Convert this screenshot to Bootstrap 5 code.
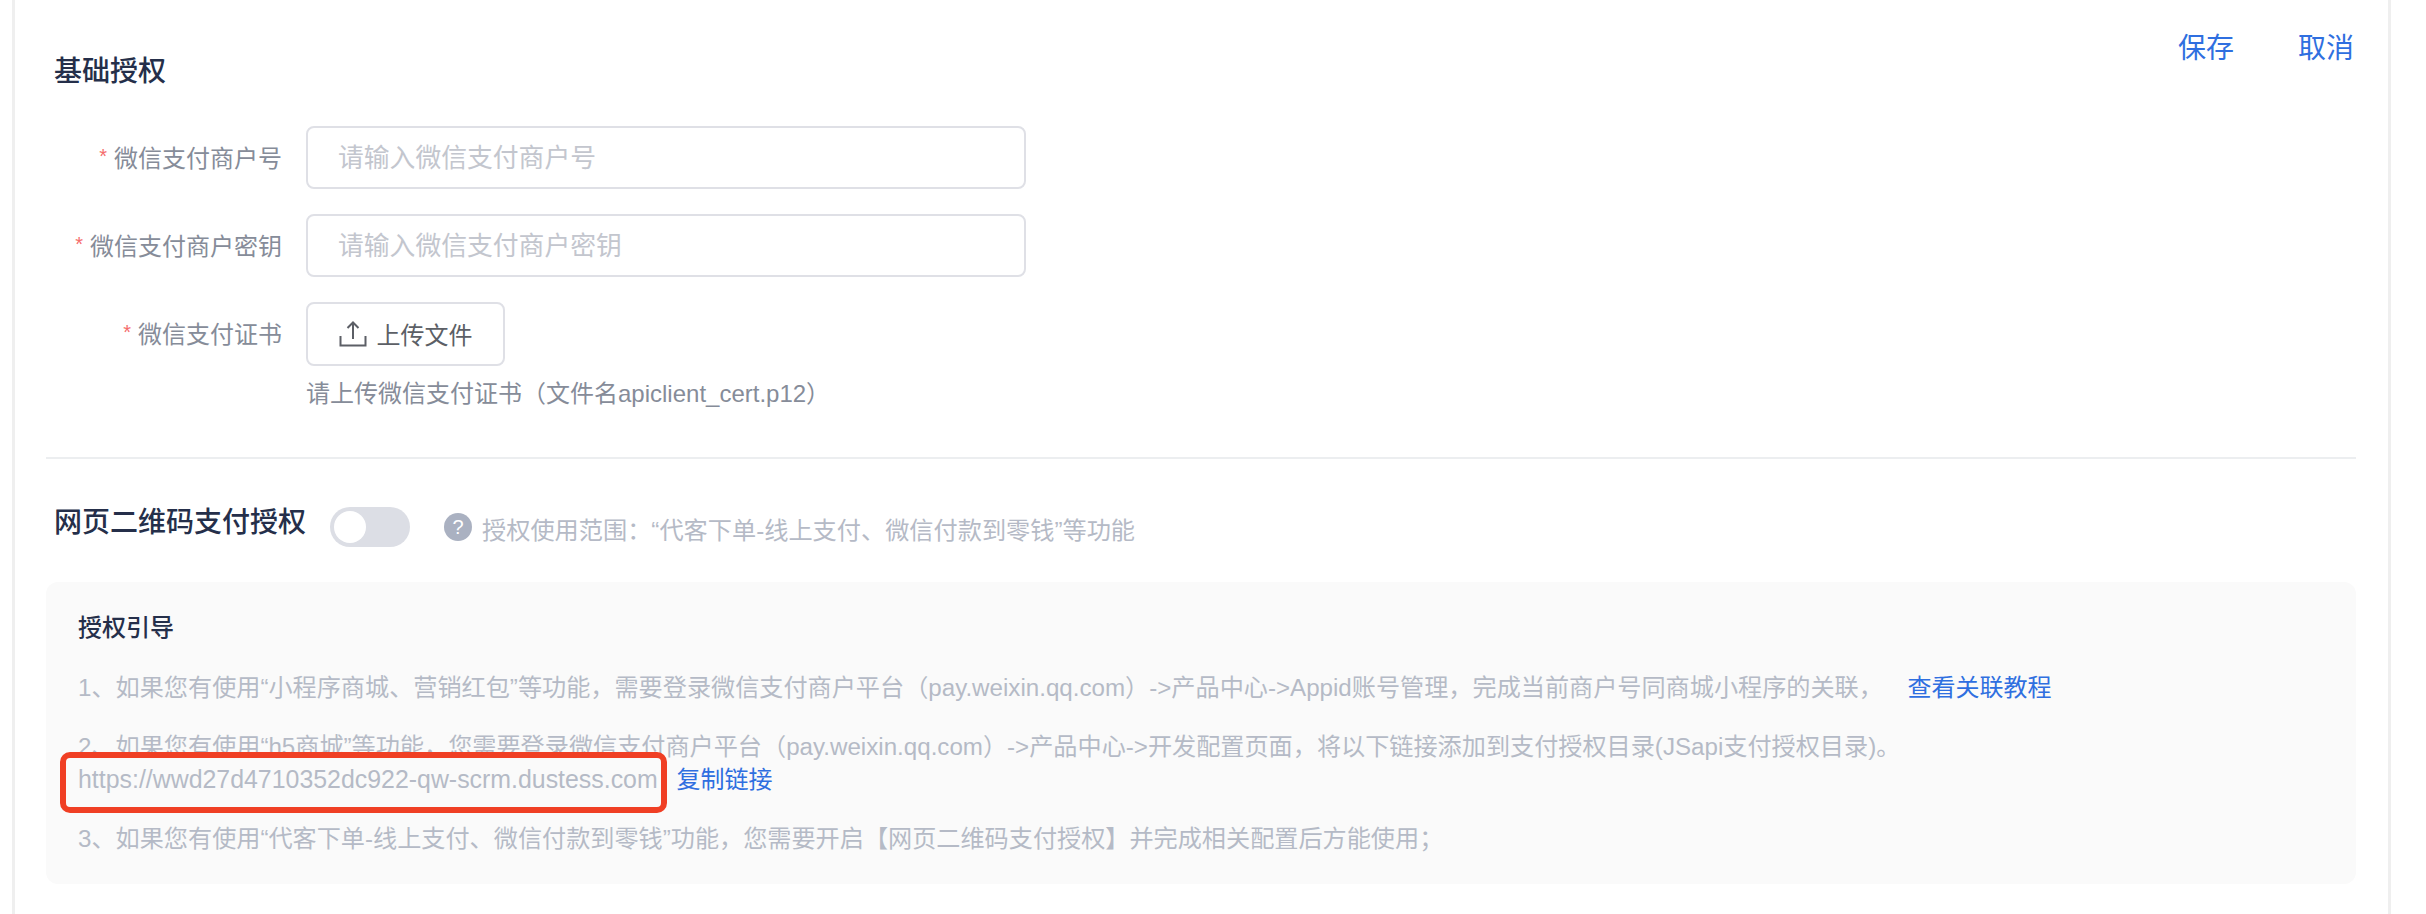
<!DOCTYPE html>
<html lang="zh-CN">
<head>
<meta charset="utf-8">
<title>基础授权</title>
<link href="https://cdn.jsdelivr.net/npm/bootstrap@5.3.0/dist/css/bootstrap.min.css" rel="stylesheet">
<style>
html,body{height:914px;overflow:hidden;background:#fff}
body{font-family:"Liberation Sans","Noto Sans CJK SC",sans-serif;font-size:24px;color:#b5bac6}
.frame{margin-left:12px;width:2379px;height:914px;border-left:3px solid #efefef;border-right:3px solid #efefef;padding:0 32px 0 31px;position:relative}
.sec-title{font-size:28px;font-weight:500;color:#252f4a;line-height:40px;margin:0}
.top-bar{height:126px}
.top-bar .sec-title{padding:52px 0 0 8px}
.top-acts{padding:29px 2px 0 0;gap:64px}
.act-link{font-size:28px;line-height:40px;color:#2f6fe0;text-decoration:none}
.form-line{margin-bottom:25px}
.form-lab{width:236px;height:63px;margin-right:24px;text-align:right;font-size:24px;color:#868c99;line-height:66px;margin-bottom:0}
.form-lab i{font-style:normal;color:#f56c6c;font-size:20px;margin-right:7px;position:relative;top:-4px}
.form-control.ipt{width:720px;height:63px;border:2.5px solid #dfe0e6;border-radius:8px;font-size:25.8px;padding:2px 30px 0;color:#333;box-shadow:none}
.ipt::placeholder{color:#c3c6ce}
.up-btn{height:64px;width:199px;border:2.5px solid #dfe0e6;border-radius:8px;font-size:24px;color:#5c5f66;background:#fff;padding:0;gap:10px}
.up-btn svg{width:28px;height:26px}
.up-btn span{padding-top:4px}
.hint{margin:12px 0 0 260px;font-size:24px;line-height:32px;color:#868c99}
.rule-line{height:2px;background:#eceef0;margin:47px 0 0;opacity:1;border:0}
.sec2{height:123px;padding:43px 0 0 8px}
.sec2 .sec-title{margin-top:1px}
.tgl{margin:5px 34px 0 24px;padding:0;min-height:0;height:40px}
.tgl .form-check-input{width:80px;height:40px;margin:0;float:none;border:0;background-color:#dcdee5;box-shadow:none;background-image:url("data:image/svg+xml,%3csvg xmlns='http://www.w3.org/2000/svg' viewBox='-4 -4 8 8'%3e%3ccircle r='3.2' fill='%23fff'/%3e%3c/svg%3e")}
.q-dot{width:28px;height:28px;border-radius:50%;background:#aab1c1;color:#fff;font-size:20px;line-height:28px;text-align:center;margin:11px 10px 0 0}
.scope{font-size:24.2px;line-height:32px;margin-top:13px;color:#b5bac6}
.guide{background:#fafafa;border-radius:12px;height:302px;padding:30px 32px 0}
.guide h6{font-size:24px;font-weight:500;color:#252f4a;line-height:32px;margin:0 0 28px}
.guide p{font-size:24.15px;line-height:32px;margin:0 0 27px;color:#b5bac6}
.url-txt{font-size:24.9px}
.blue{color:#2f6fe0;text-decoration:none;font-size:24px}
.gap-a{margin-left:18px}
.gap-b{margin-left:12px}
.red-box{position:absolute;left:45px;top:752px;width:607px;height:61px;border:6px solid #f03f24;border-radius:10px;pointer-events:none}
</style>
</head>
<body>
<div class="frame">
  <div class="top-bar d-flex justify-content-between align-items-start">
    <h5 class="sec-title">基础授权</h5>
    <div class="top-acts d-flex">
      <a class="act-link" href="#">保存</a>
      <a class="act-link" href="#">取消</a>
    </div>
  </div>
  <form>
    <div class="form-line d-flex">
      <label class="form-lab"><i>*</i>微信支付商户号</label>
      <input class="form-control ipt" type="text" placeholder="请输入微信支付商户号">
    </div>
    <div class="form-line d-flex">
      <label class="form-lab"><i>*</i>微信支付商户密钥</label>
      <input class="form-control ipt" type="text" placeholder="请输入微信支付商户密钥">
    </div>
    <div class="d-flex">
      <label class="form-lab"><i>*</i>微信支付证书</label>
      <button type="button" class="btn up-btn d-flex align-items-center justify-content-center">
        <svg viewBox="0 0 28 26" fill="none" stroke="#5c5f66" stroke-width="2"><path d="M14 18V1.500M8.500 7 14 1.500 19.500 7M1.500 15v9.500h25V15"/></svg>
        <span>上传文件</span>
      </button>
    </div>
    <div class="hint">请上传微信支付证书（文件名apiclient_cert.p12）</div>
  </form>
  <hr class="rule-line">
  <div class="sec2 d-flex align-items-start">
    <h5 class="sec-title">网页二维码支付授权</h5>
    <div class="form-check form-switch tgl"><input class="form-check-input" type="checkbox" role="switch" aria-label="网页二维码支付授权"></div>
    <div class="q-dot">?</div>
    <div class="scope">授权使用范围：“代客下单-线上支付、微信付款到零钱”等功能</div>
  </div>
  <div class="guide">
    <h6>授权引导</h6>
    <p>1、如果您有使用“小程序商城、营销红包”等功能，需要登录微信支付商户平台（pay.weixin.qq.com）-&gt;产品中心-&gt;Appid账号管理，完成当前商户号同商城小程序的关联， <a class="blue gap-a" href="#">查看关联教程</a></p>
    <p>2、如果您有使用“h5商城”等功能，您需要登录微信支付商户平台（pay.weixin.qq.com）-&gt;产品中心-&gt;开发配置页面，将以下链接添加到支付授权目录(JSapi支付授权目录)。<br><span class="url-txt">https://wwd27d4710352dc922-qw-scrm.dustess.com</span> <a class="blue gap-b" href="#">复制链接</a></p>
    <p>3、如果您有使用“代客下单-线上支付、微信付款到零钱”功能，您需要开启【网页二维码支付授权】并完成相关配置后方能使用；</p>
  </div>
  <div class="red-box"></div>
</div>
<script src="https://cdn.jsdelivr.net/npm/bootstrap@5.3.0/dist/js/bootstrap.bundle.min.js"></script>
</body>
</html>
